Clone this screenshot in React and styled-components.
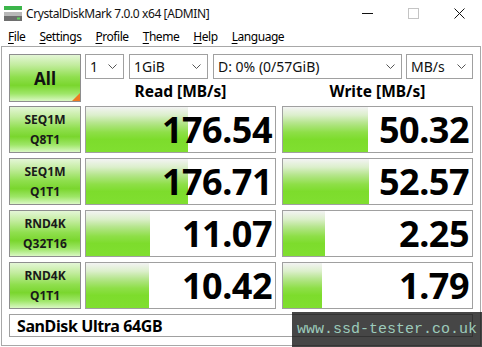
import React from 'react'
import styled, { createGlobalStyle } from 'styled-components'

const Global = createGlobalStyle`
  html, body { margin: 0; padding: 0; background: #fff; }
  body { font-family: "Noto Sans", "Open Sans", sans-serif; color: #000; }
`

const Window = styled.div`
  width: 482px;
  height: 347px;
  background: #fff;
  position: relative;
  overflow: hidden;
`

const TitleBar = styled.div`
  height: 27px;
  display: flex;
  align-items: center;
`

const TitleIcon = styled.svg`
  margin-left: 4px;
  width: 18px;
  height: 16px;
  flex: none;
`

const TitleText = styled.div`
  margin-left: 4px;
  font-size: 12px;
  letter-spacing: -0.4px;
  color: #111;
  flex: 1;
  white-space: nowrap;
`

const Controls = styled.div`
  display: flex;
  height: 27px;
`

const ControlButton = styled.div`
  width: 46px;
  display: flex;
  align-items: center;
  justify-content: center;
`

const MenuBar = styled.div`
  height: 19px;
  display: flex;
  align-items: center;
  padding-left: 1px;
  font-size: 12px;
  letter-spacing: -0.45px;
`

const MenuItem = styled.div`
  padding: 0 7px;
  white-space: nowrap;
  u { text-decoration: underline; text-underline-offset: 2px; }
`

const Client = styled.div`
  box-sizing: border-box;
  margin-left: 1px;
  width: 480px;
  height: 300px;
  border: 1px solid #a8a8a8;
  padding: 7px 0 0 7px;
  display: flex;
  flex-direction: column;
`

const TopSection = styled.div`
  display: flex;
  height: 48px;
  margin-bottom: 4px;
`

const LabelButton = styled.div`
  box-sizing: border-box;
  width: 72px;
  height: ${p => p.$h || 47}px;
  flex: none;
  border: 1px solid #8e8e8e;
  background: linear-gradient(to bottom, #e4f6d6 0%, #c2ec9e 22%, #8fdf4e 48%, #7ad62e 66%, #9ee668 84%, #daf8c4 100%);
  display: flex;
  flex-direction: column;
  align-items: center;
  justify-content: center;
  position: relative;
  font-weight: 700;
  color: #1a1a1a;
`

const AllText = styled.span`
  font-size: 17px;
  color: #111;
`

const LabelLine = styled.span`
  font-size: 12px;
  line-height: 20px;
`

const Corner = styled.div`
  position: absolute;
  right: 0;
  bottom: 0;
  width: 0;
  height: 0;
  border-style: solid;
  border-width: 0 0 8px 8px;
  border-color: transparent transparent #ee7a22 transparent;
`

const RightTop = styled.div`
  margin-left: 4px;
  display: flex;
  flex-direction: column;
`

const Selects = styled.div`
  display: flex;
  height: 25px;
`

const Select = styled.div`
  box-sizing: border-box;
  width: ${p => p.$w}px;
  margin-left: ${p => p.$ml || 0}px;
  height: 25px;
  border: 1px solid #a0a0a0;
  background: #fff;
  display: flex;
  align-items: center;
  padding: 0 6px 0 4px;
  font-size: 14px;
  color: #111;
  white-space: nowrap;
`

const SelectText = styled.span`
  flex: 1;
`

const Headers = styled.div`
  display: flex;
  height: 23px;
  align-items: center;
`

const Header = styled.div`
  width: 191px;
  margin-left: ${p => p.$ml || 0}px;
  text-align: center;
  font-size: 15.5px;
  font-weight: 700;
`

const Row = styled.div`
  display: flex;
  height: 47px;
  margin-bottom: 5px;
`

const Cell = styled.div`
  box-sizing: border-box;
  width: 191px;
  height: 47px;
  margin-left: ${p => p.$ml}px;
  border: 1px solid #a0a0a0;
  background: #fff;
  position: relative;
  display: flex;
  align-items: center;
  justify-content: flex-end;
  padding-right: 3px;
`

const Bar = styled.div`
  position: absolute;
  left: 0;
  top: 0;
  bottom: 0;
  background: linear-gradient(to bottom, #f3f3f3 0%, #dcefcc 18%, #b4e58a 36%, #8edf48 56%, #7ddc2c 72%, #80df30 100%);
`

const Value = styled.span`
  position: relative;
  font-size: 36px;
  font-weight: 700;
  letter-spacing: -0.5px;
  line-height: 1;
`

const NameBox = styled.div`
  box-sizing: border-box;
  width: 464px;
  height: 23px;
  border: 1px solid #a0a0a0;
  display: flex;
  align-items: center;
  padding-left: 7px;
  font-size: 16px;
  letter-spacing: -0.4px;
  font-weight: 700;
`

const Watermark = styled.div`
  position: absolute;
  left: 292px;
  top: 312px;
  right: 0;
  bottom: 0;
  background: rgba(24, 24, 24, 0.8);
  display: flex;
  align-items: center;
  padding-left: 5px;
  font-family: "Liberation Mono", "DejaVu Sans Mono", monospace;
  font-size: 15px;
  color: #9ccbbb;
`

const Chevron = () => (
  <svg width="9" height="5" viewBox="0 0 9 5">
    <polyline points="0.5,0.5 4.5,4.5 8.5,0.5" fill="none" stroke="#555" strokeWidth="1" />
  </svg>
)

const rows = [
  { a: 'SEQ1M', b: 'Q8T1', read: '176.54', rw: 102, write: '50.32', ww: 85 },
  { a: 'SEQ1M', b: 'Q1T1', read: '176.71', rw: 102, write: '52.57', ww: 86 },
  { a: 'RND4K', b: 'Q32T16', read: '11.07', rw: 64, write: '2.25', ww: 42 },
  { a: 'RND4K', b: 'Q1T1', read: '10.42', rw: 63, write: '1.79', ww: 39 },
]

const menus = ['File', 'Settings', 'Profile', 'Theme', 'Help', 'Language']

export default function App() {
  return (
    <Window>
      <Global />
      <TitleBar>
        <TitleIcon viewBox="0 0 18 16">
          <rect x="0" y="0" width="18" height="4" fill="#3bb54a" />
          <rect x="0" y="6" width="18" height="4" fill="#b8b8b8" />
          <rect x="0" y="10" width="18" height="5" fill="#6e6e6e" />
          <rect x="13" y="11.5" width="3" height="2" fill="#5fd35f" />
        </TitleIcon>
        <TitleText>CrystalDiskMark 7.0.0 x64 [ADMIN]</TitleText>
        <Controls>
          <ControlButton>
            <svg width="11" height="11" viewBox="0 0 11 11"><line x1="0" y1="5.5" x2="11" y2="5.5" stroke="#111" strokeWidth="1" /></svg>
          </ControlButton>
          <ControlButton>
            <svg width="11" height="11" viewBox="0 0 11 11"><rect x="0.5" y="0.5" width="10" height="10" fill="none" stroke="#c4c4c4" strokeWidth="1" /></svg>
          </ControlButton>
          <ControlButton>
            <svg width="11" height="11" viewBox="0 0 11 11"><path d="M0.5 0.5 L10.5 10.5 M10.5 0.5 L0.5 10.5" stroke="#111" strokeWidth="1" /></svg>
          </ControlButton>
        </Controls>
      </TitleBar>
      <MenuBar>
        {menus.map(m => (
          <MenuItem key={m}><u>{m[0]}</u>{m.slice(1)}</MenuItem>
        ))}
      </MenuBar>
      <Client>
        <TopSection>
          <LabelButton $h={48}>
            <AllText>All</AllText>
            <Corner />
          </LabelButton>
          <RightTop>
            <Selects>
              <Select $w={39}><SelectText>1</SelectText><Chevron /></Select>
              <Select $w={79} $ml={5}><SelectText>1GiB</SelectText><Chevron /></Select>
              <Select $w={189} $ml={5}><SelectText>D: 0% (0/57GiB)</SelectText><Chevron /></Select>
              <Select $w={67} $ml={4}><SelectText>MB/s</SelectText><Chevron /></Select>
            </Selects>
            <Headers>
              <Header>Read [MB/s]</Header>
              <Header $ml={6}>Write [MB/s]</Header>
            </Headers>
          </RightTop>
        </TopSection>
        {rows.map((r, i) => (
          <Row key={i}>
            <LabelButton>
              <LabelLine>{r.a}</LabelLine>
              <LabelLine>{r.b}</LabelLine>
            </LabelButton>
            <Cell $ml={4}>
              <Bar style={{ width: r.rw }} />
              <Value>{r.read}</Value>
            </Cell>
            <Cell $ml={6}>
              <Bar style={{ width: r.ww }} />
              <Value>{r.write}</Value>
            </Cell>
          </Row>
        ))}
        <NameBox>SanDisk Ultra 64GB</NameBox>
      </Client>
      <Watermark>www.ssd-tester.co.uk</Watermark>
    </Window>
  )
}
